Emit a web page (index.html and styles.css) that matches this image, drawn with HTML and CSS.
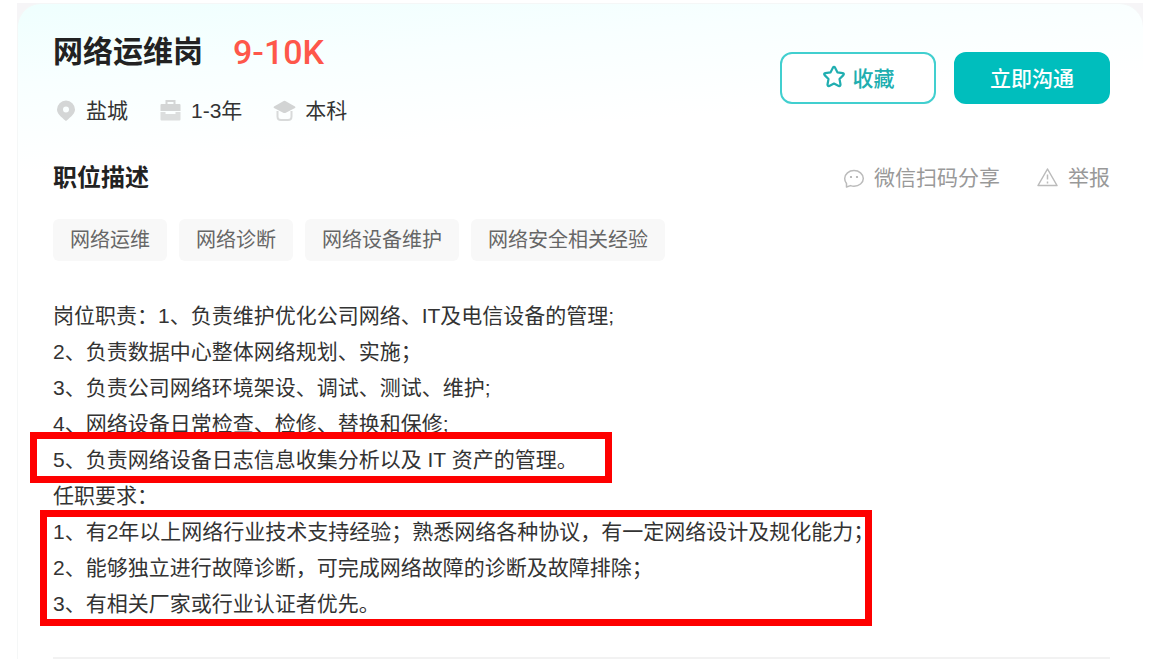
FILE: index.html
```html
<!DOCTYPE html>
<html lang="zh-CN">
<head>
    <meta charset="UTF-8">
    <meta name="viewport" content="width=device-width, initial-scale=1.0">
    <title>网络运维岗</title>
    <link rel="stylesheet" href="styles.css">
</head>
<body>
    <div class="page">
        <main class="job-card">
            <header class="job-header">
                <div class="job-info">
                    <div class="job-name">
                        <h1>网络运维岗</h1>
                        <span class="salary">9-10K</span>
                    </div>
                    <ul class="job-meta">
                        <li>
                            <svg width="24" height="24" viewBox="0 0 24 24"><path fill="#d4d6d6" fill-rule="evenodd" d="M13 1.500a9 9 0 0 0-9 9c0 4 3.500 7 9 11.500 5.500-4.500 9-7.500 9-11.500a9 9 0 0 0-9-9zm0 6a3 3 0 1 1 0 6 3 3 0 0 1 0-6z"/></svg>
                            盐城
                        </li>
                        <li>
                            <svg width="24" height="24" viewBox="0 0 24 24"><path fill="none" stroke="#d4d6d6" stroke-width="2" d="M8.500 6V2h8v4"/><path fill="#d4d6d6" d="M3.500 5h18a1 1 0 0 1 1 1v6h-20V6a1 1 0 0 1 1-1z"/><path fill="#dcdede" d="M2.500 13h5v2h10v-2h5v7.500a1 1 0 0 1-1 1h-18a1 1 0 0 1-1-1z"/></svg>
                            1-3年
                        </li>
                        <li>
                            <svg width="24" height="24" viewBox="0 0 24 24"><path fill="#d2d4d4" d="M13.300 2a2 2 0 0 0-1.600 0L2 7.500q-1 .7 0 1.400l9.700 5q.8.400 1.600 0l9.700-5q1-.7 0-1.400z"/><path fill="none" stroke="#d8dada" stroke-width="2" d="M5.500 12v5.500q0 3.500 3.500 3.500h7q3.500 0 3.500-3.500V12"/></svg>
                            本科
                        </li>
                    </ul>
                </div>
                <div class="job-actions">
                    <button type="button" class="btn btn-outline">
                        <svg width="24" height="24" viewBox="0 0 24 24"><path fill="none" stroke="#20aeb0" stroke-width="2.200" stroke-linejoin="round" d="M10.900 2.700q1.100-1.700 2.200 0l2.300 4.600 5.300.8q1.900.5.700 2l-3.900 3.900 1 5.500q0 2-1.800 1.400L12 18.500l-4.700 2.400q-1.800.6-1.800-1.400l1-5.500-3.900-3.900q-1.200-1.500.7-2l5.300-.8z"/></svg>
                        收藏
                    </button>
                    <button type="button" class="btn btn-primary">立即沟通</button>
                </div>
            </header>

            <div class="section-head">
                <h2>职位描述</h2>
                <div class="section-links">
                    <a href="#">
                        <svg width="22" height="22" viewBox="0 0 22 22"><path fill="none" stroke="#bbb" stroke-width="1.500" stroke-linejoin="round" d="M3.500 20v-3.500C2.200 15 1.700 13 1.700 11.500 1.700 7 6 3.500 11 3.500s9.300 3.500 9.300 8-4.300 7.700-9.300 7.700c-1.200 0-2.400-.2-3.500-.6z"/><circle cx="8" cy="10" r="1.100" fill="#aaa"/><circle cx="14" cy="10" r="1.100" fill="#aaa"/></svg>
                        微信扫码分享
                    </a>
                    <a href="#">
                        <svg width="22" height="22" viewBox="0 0 22 22"><path fill="none" stroke="#bbb" stroke-width="1.500" stroke-linejoin="round" d="M10.500 2 20 18.500H1z"/><path fill="none" stroke="#bbb" stroke-width="1.500" d="M10.500 7.500v5M10.500 14.500v2"/></svg>
                        举报
                    </a>
                </div>
            </div>

            <ul class="tags">
                <li>网络运维</li>
                <li>网络诊断</li>
                <li>网络设备维护</li>
                <li>网络安全相关经验</li>
            </ul>

            <div class="job-desc">
                <p>岗位职责：1、负责维护优化公司网络、IT及电信设备的管理;</p>
                <p>2、负责数据中心整体网络规划、实施；</p>
                <p>3、负责公司网络环境架设、调试、测试、维护;</p>
                <p>4、网络设备日常检查、检修、替换和保修;</p>
                <div class="marked marked-duty">
                    <p>5、负责网络设备日志信息收集分析以及 IT 资产的管理。</p>
                </div>
                <p>任职要求：</p>
                <div class="marked marked-require">
                    <p>1、有2年以上网络行业技术支持经验；熟悉网络各种协议，有一定网络设计及规化能力；</p>
                    <p>2、能够独立进行故障诊断，可完成网络故障的诊断及故障排除；</p>
                    <p>3、有相关厂家或行业认证者优先。</p>
                </div>
            </div>
            <hr>
        </main>
    </div>
</body>
</html>
```

FILE: styles.css
```css
* {
    box-sizing: border-box;
}

body {
    margin: 0;
    background: #fff;
    color: #333;
    font-family: "Liberation Sans", "Noto Sans CJK SC", sans-serif;
    font-size: 21px;
}

h1, h2, p, ul {
    margin: 0;
    padding: 0;
}

ul {
    list-style: none;
}

svg {
    display: block;
    flex: none;
}

.page {
    margin: 3px 29px 0 17px;
    background: linear-gradient(#f6f5f7, #f6f5f7) no-repeat 0 0 / 100% 40px;
}

.job-card {
    padding: 24px 33px 0 35px;
    border-left: 1px solid #f5f7f7;
    border-top: 1px solid #f5f7f7;
    border-radius: 24px 24px 0 0;
    background: linear-gradient(175deg, #effffe 0, #f8ffff 80px, #fff 170px);
}

.job-header {
    display: flex;
    justify-content: space-between;
    align-items: flex-start;
}

.job-name {
    display: flex;
    align-items: center;
    gap: 30px;
    height: 48px;
}

h1 {
    font-size: 30px;
    line-height: 48px;
    color: #222;
}

.salary {
    font-family: Roboto, sans-serif;
    font-size: 34px;
    font-weight: 500;
    line-height: 48px;
    color: #fe574a;
}

.job-meta {
    display: flex;
    gap: 30px;
    margin-top: 17px;
}

.job-meta li {
    display: flex;
    align-items: center;
    gap: 9px;
    line-height: 36px;
}

.job-actions {
    display: flex;
    gap: 18px;
    margin-top: 24px;
}

.btn {
    display: flex;
    align-items: center;
    justify-content: center;
    gap: 7px;
    width: 156px;
    height: 52px;
    padding: 0 0 2px;
    border: 2px solid #00bebd;
    border-radius: 12px;
    font-family: inherit;
    font-size: 21px;
    font-weight: 500;
    cursor: pointer;
}

.btn-outline {
    border-color: #41cfcf;
    background: #fff;
    color: #20aeb0;
}

.btn-primary {
    background: #00bebd;
    color: #fff;
}

.section-head {
    display: flex;
    justify-content: space-between;
    align-items: center;
    margin-top: 31px;
}

h2 {
    font-size: 24px;
    line-height: 36px;
    color: #222;
}

.section-links {
    display: flex;
    gap: 37px;
}

.section-links a {
    display: flex;
    align-items: center;
    gap: 9px;
    line-height: 36px;
    color: #999;
    text-decoration: none;
}

.tags {
    display: flex;
    flex-wrap: wrap;
    gap: 12px;
    margin-top: 23px;
}

.tags li {
    padding: 0 17px;
    border-radius: 6px;
    background: #f8f8f8;
    font-size: 20px;
    line-height: 42px;
    color: #666;
}

.job-desc {
    margin-top: 37px;
    line-height: 36px;
}

.marked {
    position: relative;
    width: fit-content;
}

/* red frame drawn over the marked lines */
.marked::after {
    content: "";
    position: absolute;
    border: 7px solid #fe0000;
}

.marked-duty::after {
    inset: -10px -34px -5px -23px;
}

.marked-require::after {
    inset: -4px 2px -4px -13px;
}

hr {
    height: 2px;
    margin: 35px 0 0;
    border: 0;
    background: #f2f2f2;
}
```
